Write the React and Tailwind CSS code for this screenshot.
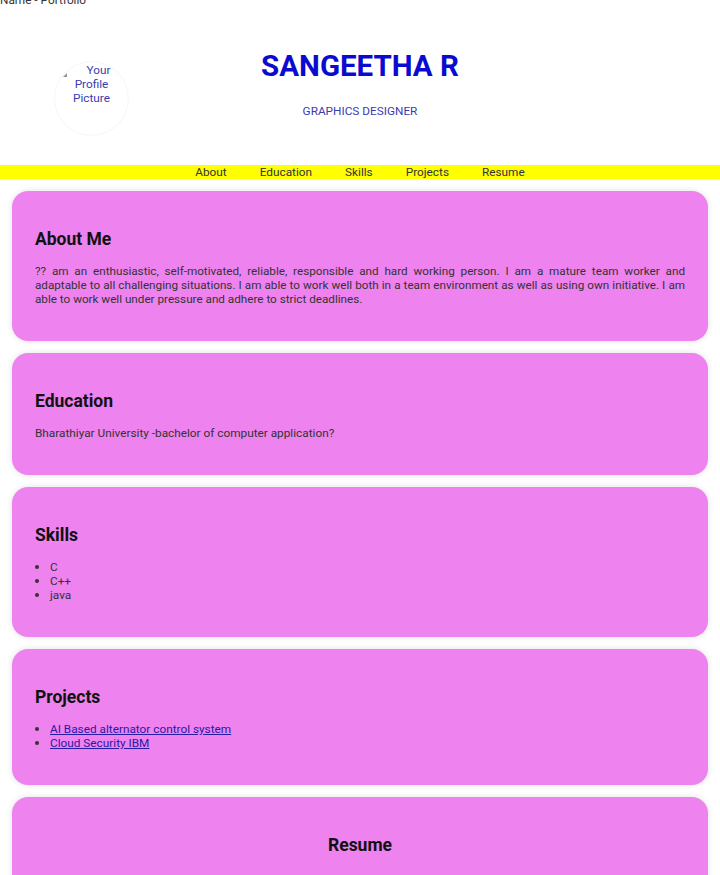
import React from 'react'

const font = { fontFamily: 'Roboto, "Noto Sans", sans-serif' }

function Card({ title, center, children }) {
  return (
    <section className="rounded-[16px] bg-[#ee82ee] px-[23px] pt-[37px] pb-[35px] shadow-[0_0_6px_rgba(0,0,0,0.12)]">
      <h2 className={`text-[17.5px] leading-[22px] font-bold text-[#111] ${center ? 'text-center' : ''}`}>{title}</h2>
      <div className="mt-[14px]">{children}</div>
    </section>
  )
}

export default function App() {
  const nav = ['About', 'Education', 'Skills', 'Projects', 'Resume']
  return (
    <div className="min-h-[875px] bg-white text-[#333] overflow-hidden" style={font}>
      <div className="-mt-[6px] text-[11.8px] leading-[13px] text-[#333]">Name - Portfolio</div>

      {/* Header */}
      <header className="grid grid-cols-[1fr_auto_1fr] h-[158px]">
        <div className="pt-[55px] pl-[55px]">
          <div className="relative w-[73px] h-[73px] rounded-full shadow-[0_0_2px_rgba(0,0,0,0.1)] flex flex-col items-center pt-[1px] text-[11.8px] leading-[14px] text-[#3b3bb3] text-center">
            <svg className="absolute left-[8px] top-[11px]" width="4" height="4" viewBox="0 0 4 4">
              <path d="M0 4 L4 0 L4 4 Z" fill="#8a9a8a" />
            </svg>
            <span className="pl-[14px]">Your</span>
            <span>Profile</span>
            <span>Picture</span>
          </div>
        </div>
        <div className="text-center pt-[41px]">
          <h1 className="text-[29.5px] leading-[36px] font-bold text-[#0a0ad0]">SANGEETHA R</h1>
          <p className="mt-[20px] text-[11.8px] leading-[14px] text-[#3b3bb3]">GRAPHICS DESIGNER</p>
        </div>
        <div />
      </header>

      {/* Nav */}
      <nav className="bg-[#ffff00] h-[14px] flex justify-center items-center gap-[33px] text-[11.8px] leading-[14px] text-[#333]">
        {nav.map((n) => (
          <a key={n} href={`#${n.toLowerCase()}`}>{n}</a>
        ))}
      </nav>

      <main className="px-[12px] pt-[12px] flex flex-col gap-[12px]">
        <Card title="About Me">
          <p className="text-[11.7px] leading-[14px] text-justify text-[#333]">
            ?? am an enthusiastic, self-motivated, reliable, responsible and hard working person. I am a mature team worker and adaptable to all challenging situations. I am able to work well both in a team environment as well as using own initiative. I am able to work well under pressure and adhere to strict deadlines.
          </p>
        </Card>
        <Card title="Education">
          <p className="text-[11.8px] leading-[14px] text-[#333]">Bharathiyar University -bachelor of computer application?</p>
        </Card>
        <Card title="Skills">
          <ul className="list-disc pl-[15px] text-[11.8px] leading-[14px] text-[#333] marker:text-[13px]">
            <li>C</li>
            <li>C++</li>
            <li>java</li>
          </ul>
        </Card>
        <Card title="Projects">
          <ul className="list-disc pl-[15px] text-[11.8px] leading-[14px] text-[#333] marker:text-[13px]">
            <li><a href="#" className="underline text-[#2a1aa6]">AI Based alternator control system</a></li>
            <li><a href="#" className="underline text-[#2a1aa6]">Cloud Security IBM</a></li>
          </ul>
        </Card>
        <Card title="Resume" center>
          <div className="h-[40px]" />
        </Card>
      </main>
    </div>
  )
}
